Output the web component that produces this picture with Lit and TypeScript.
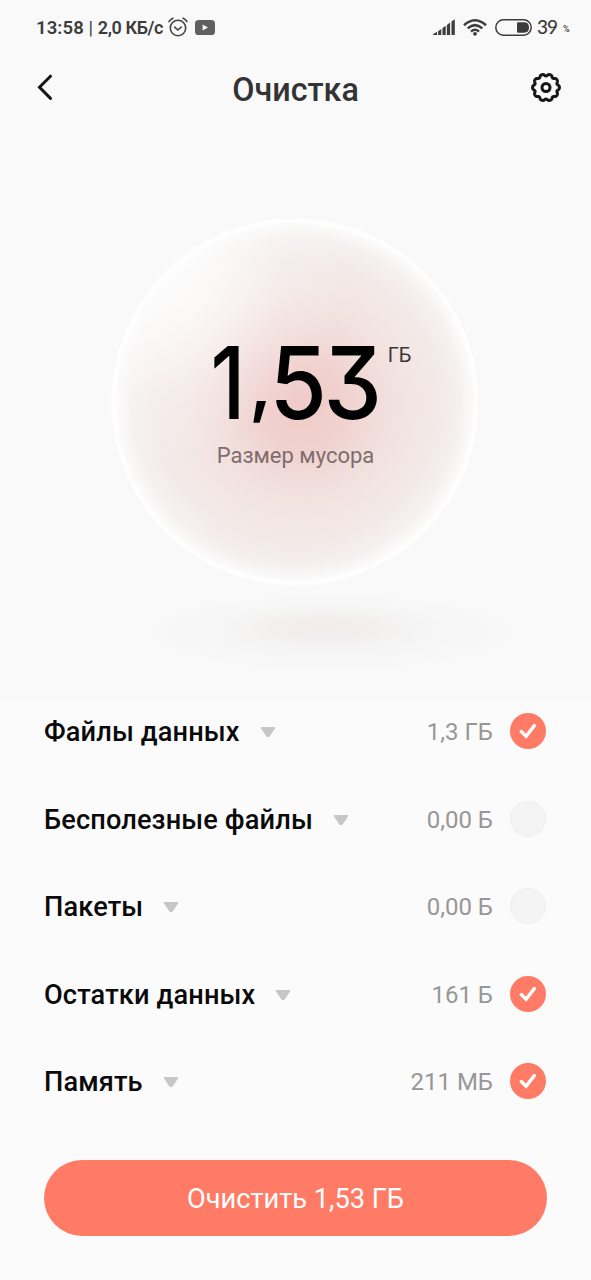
import { LitElement, html, css, svg } from "lit";
import { customElement, property } from "lit/decorators.js";
import { classMap } from "lit/directives/class-map.js";

/** Closed outline of a cog: a circle with narrow rounded notches. */
function cogPath(cx: number, cy: number, r: number, depth: number, teeth: number): string {
  const steps = 360;
  let d = "";
  for (let i = 0; i < steps; i++) {
    const a = (i / steps) * Math.PI * 2;
    const notch = Math.pow((1 + Math.cos(teeth * (a + Math.PI / 2))) / 2, 1.6);
    const rr = r - depth * notch;
    d += `${i ? "L" : "M"}${(cx + rr * Math.cos(a)).toFixed(2)} ${(cy + rr * Math.sin(a)).toFixed(2)}`;
  }
  return d + "Z";
}

@customElement("status-bar")
class StatusBar extends LitElement {
  static styles = css`
    :host { display: flex; align-items: center; height: 54px; padding: 0 19px 0 36px; box-sizing: border-box; color: #3c3c3c; }
    .left, .right { display: flex; align-items: center; }
    .right { margin-left: auto; }
    .clock { font-size: 18.5px; font-weight: 600; letter-spacing: 0.1px; line-height: 20px; white-space: pre; padding-top: 2px; }
    .bar { font-weight: 400; }
    .speed { font-size: 18px; font-weight: 600; letter-spacing: -0.4px; line-height: 20px; white-space: pre; padding-top: 2px; }
    .alarm { margin-left: 5px; }
    .tube { margin-left: 7px; }
    .wifi { margin-left: 8px; }
    .battery { margin-left: 8px; }
    .level { margin-left: 5px; font: 500 19px/20px Lato, sans-serif; letter-spacing: -1px; width: 26px; }
    .percent { font: 500 9px/12px Roboto, sans-serif; padding-top: 4px; width: 9px; }
    svg { display: block; }
  `;
  render() {
    return html`
      <div class="left">
        <span class="clock">13:58 <span class="bar">|</span> </span><span class="speed">2,0 КБ/с</span>
        <svg class="alarm" width="20" height="20" viewBox="0 0 20 20" fill="none" stroke="#444" stroke-width="1.6" stroke-linecap="round">
          <circle cx="10" cy="11" r="7.7" /><path d="M6.7 10.2L9.8 13L13.2 10.2M1 4.6Q2.4 2.2 4.9 1.2M19 4.6Q17.6 2.2 15.1 1.2" />
        </svg>
        <svg class="tube" width="20" height="15" viewBox="0 0 20 15">
          <rect width="20" height="15" rx="3.6" fill="#606060" /><path d="M7.6 4.6L13 7.5L7.6 10.4Z" fill="#f9f9f9" />
        </svg>
      </div>
      <div class="right">
        <svg width="22" height="17" viewBox="0 0 22 17" fill="#3c3c3c">
          <path d="M0 16V15.2L4 12.7V16ZM5.1 12.2L8.3 10V16H5.1ZM9.5 9.1L12.7 6.8V16H9.5ZM13.9 5.9L17.1 3.6V16H13.9ZM18.5 2.5L21.8 .2V16H18.5Z" />
        </svg>
        <svg class="wifi" width="24" height="17" viewBox="0 0 24 17" fill="none" stroke="#3c3c3c" stroke-width="2.5">
          <path d="M1 6.2Q12-3.6 23 6.2M4.7 9.4Q12 2.9 19.3 9.4M8 12.6Q12 9 16 12.6" /><circle cx="12" cy="14.8" r="1.9" fill="#3c3c3c" stroke="none" />
        </svg>
        <svg class="battery" width="37" height="17" viewBox="0 0 37 17">
          <rect x=".8" y=".8" width="35.4" height="15.4" rx="7.7" fill="none" stroke="#3c3c3c" stroke-width="1.5" />
          <path d="M23 3.3H29Q34 3.3 34 8.5T29 13.7H23Q22 13.7 22 12.7V4.3Q22 3.3 23 3.3Z" fill="#3c3c3c" />
        </svg>
        <span class="level">39</span><span class="percent">%</span>
      </div>
    `;
  }
}

@customElement("junk-orb")
class JunkOrb extends LitElement {
  @property() amount = "";
  static styles = css`
    :host { display: grid; height: 580px; }
    .backdrop, .readout { grid-area: 1 / 1; display: block; }
    .readout { display: flex; flex-direction: column; align-items: center; padding-top: 201px; }
    .value { display: flex; align-items: flex-start; margin-left: 28px; }
    .unit { font-size: 20px; font-weight: 450; line-height: 24px; color: #3c3535; margin-top: 22px; }
    .caption { font-size: 22px; line-height: 28px; color: #7f6d6b; margin-top: -4px; }
    .digits { font-family: Inter, sans-serif; font-size: 100px; font-weight: 450; font-feature-settings: "cv09"; }
  `;
  render() {
    return html`
      <svg class="backdrop" width="591" height="580" viewBox="0 120 591 580">
        <defs>
          <radialGradient id="body" gradientUnits="userSpaceOnUse" cx="302" cy="405" r="190">
            <stop offset="0" stop-color="#efcbc7" /><stop offset=".22" stop-color="#f0d1ce" />
            <stop offset=".42" stop-color="#f1dedc" /><stop offset=".62" stop-color="#f2e7e5" /><stop offset="1" stop-color="#f4eeed" />
          </radialGradient>
          <radialGradient id="shine" gradientUnits="userSpaceOnUse" cx="150" cy="265" r="200">
            <stop offset="0" stop-color="#fff" stop-opacity=".95" /><stop offset=".3" stop-color="#fff" stop-opacity=".68" />
            <stop offset=".65" stop-color="#fff" stop-opacity=".22" /><stop offset="1" stop-color="#fff" stop-opacity="0" />
          </radialGradient>
          <radialGradient id="rim" gradientUnits="userSpaceOnUse" cx="295" cy="402" r="184.5">
            <stop offset=".76" stop-color="#fafafa" stop-opacity="0" /><stop offset=".88" stop-color="#fafafa" stop-opacity=".28" />
            <stop offset=".96" stop-color="#fcfcfc" stop-opacity=".85" /><stop offset=".98" stop-color="#fff" /><stop offset="1" stop-color="#fbfbfb" />
          </radialGradient>
          <radialGradient id="ground"><stop offset="0" stop-color="#f3ebe9" /><stop offset=".45" stop-color="#f3efee" stop-opacity=".75" /><stop offset="1" stop-color="#f8f8f8" stop-opacity="0" /></radialGradient>
          <radialGradient id="haze"><stop offset="0" stop-color="#f1f0f0" /><stop offset=".5" stop-color="#f4f4f4" stop-opacity=".7" /><stop offset="1" stop-color="#f8f8f8" stop-opacity="0" /></radialGradient>
        </defs>
        <ellipse cx="330" cy="632" rx="225" ry="48" fill="url(#haze)" />
        <ellipse cx="325" cy="628" rx="130" ry="30" fill="url(#ground)" />
        <circle cx="295" cy="402" r="184.5" fill="url(#body)" />
        <circle cx="295" cy="402" r="184.5" fill="url(#shine)" />
        <circle cx="295" cy="402" r="184.5" fill="url(#rim)" />
      </svg>
      <div class="readout">
        <div class="value">
          <svg width="180" height="125" viewBox="0 0 180 125">
            <g class="digits">
              ${[
                [2.5, 98, 0.84, 1],
                [40.5, 88, 0.8, 0.76],
                [61.5, 98, 0.93, 1],
                [115.5, 98, 0.93, 1],
              ].map(([x, y, sx, sy], i) => svg`<text transform="translate(${x} ${y}) scale(${sx} ${sy})">${this.amount[i]}</text>`)}
            </g>
          </svg>
          <span class="unit">ГБ</span>
        </div>
        <span class="caption">Размер мусора</span>
      </div>
    `;
  }
}

@customElement("junk-row")
class JunkRow extends LitElement {
  @property() label = "";
  @property() size = "";
  @property({ type: Boolean }) checked = false;
  static styles = css`
    :host { display: flex; align-items: center; height: 87.5px; padding-right: 1px; }
    .label { font-size: 27.2px; font-weight: 500; line-height: 36px; color: #0a0a0a; letter-spacing: 0.13px; padding-top: 1px; }
    .arrow { margin: 2px 0 0 20px; }
    .size { margin-left: auto; font-size: 24px; line-height: 32px; color: #979797; padding-top: 1px; }
    .tick { display: grid; place-items: center; box-sizing: border-box; width: 36px; height: 36px; margin: -1px 0 0 17px; border-radius: 50%; background: #f4f4f4; border: 1px solid #eee; }
    .tick.on { background: #ff7b66; border: 0; }
    svg { display: block; }
  `;
  render() {
    return html`
      <span class="label">${this.label}</span>
      <svg class="arrow" width="16" height="11" viewBox="0 0 16 11"><path d="M1.5 .8H14.5L9 9Q8 10 7 9Z" fill="#c6c6c6" stroke="#c6c6c6" stroke-width="1.5" stroke-linejoin="round" /></svg>
      <span class="size">${this.size}</span>
      <span class=${classMap({ tick: true, on: this.checked })}>
        ${this.checked
          ? html`<svg width="18" height="16" viewBox="0 0 18 16"><path d="M2.3 8.6L7.1 13.2L15.3 2.6" fill="none" stroke="#fff" stroke-width="3.4" stroke-linecap="round" /></svg>`
          : ""}
      </span>
    `;
  }
}

@customElement("app-root")
class AppRoot extends LitElement {
  static styles = css`
    :host { display: flex; flex-direction: column; width: 591px; height: 1280px; overflow: hidden; background: #f9f9f9; font-family: Roboto, sans-serif; }
    .header { display: grid; grid-template-columns: 60px 1fr 60px; align-items: center; height: 66px; }
    .title { margin: 0; text-align: center; font-size: 32.3px; font-weight: 500; line-height: 40px; color: #333; padding-top: 5px; }
    .back { margin-left: 36px; display: block; }
    .gear { display: block; margin-top: 1px; }
    .list { flex: 1; display: flex; flex-direction: column; padding: 0 44px; background: #fbfbfb; }
    .rows { margin-top: -12px; }
    .clean { margin: 34px 0 0; height: 76px; border: 0; border-radius: 38px; background: #ff7b66; color: #fff; font: 400 27.2px/36px Roboto, sans-serif; padding: 2px 0 0; }
  `;
  render() {
    const rows: [string, string, boolean][] = [
      ["Файлы данных", "1,3 ГБ", true],
      ["Бесполезные файлы", "0,00 Б", false],
      ["Пакеты", "0,00 Б", false],
      ["Остатки данных", "161 Б", true],
      ["Память", "211 МБ", true],
    ];
    return html`
      <status-bar></status-bar>
      <header class="header">
        <svg class="back" width="18" height="28" viewBox="0 0 18 28"><path d="M14.5 3.2L3.5 14.2L14.5 25.4" fill="none" stroke="#161616" stroke-width="3" stroke-linecap="round" /></svg>
        <h1 class="title">Очистка</h1>
        <svg class="gear" width="32" height="32" viewBox="0 0 32 32" fill="none" stroke="#161616" stroke-width="3" stroke-linejoin="round">
          <path d=${cogPath(15, 15.5, 13.4, 1.9, 10)} /><circle cx="15" cy="15.5" r="4" />
        </svg>
      </header>
      <junk-orb amount="1,53"></junk-orb>
      <main class="list">
        <div class="rows">
          ${rows.map(([label, size, on]) => html`<junk-row label=${label} size=${size} ?checked=${on}></junk-row>`)}
        </div>
        <button class="clean">Очистить 1,53 ГБ</button>
      </main>
    `;
  }
}
